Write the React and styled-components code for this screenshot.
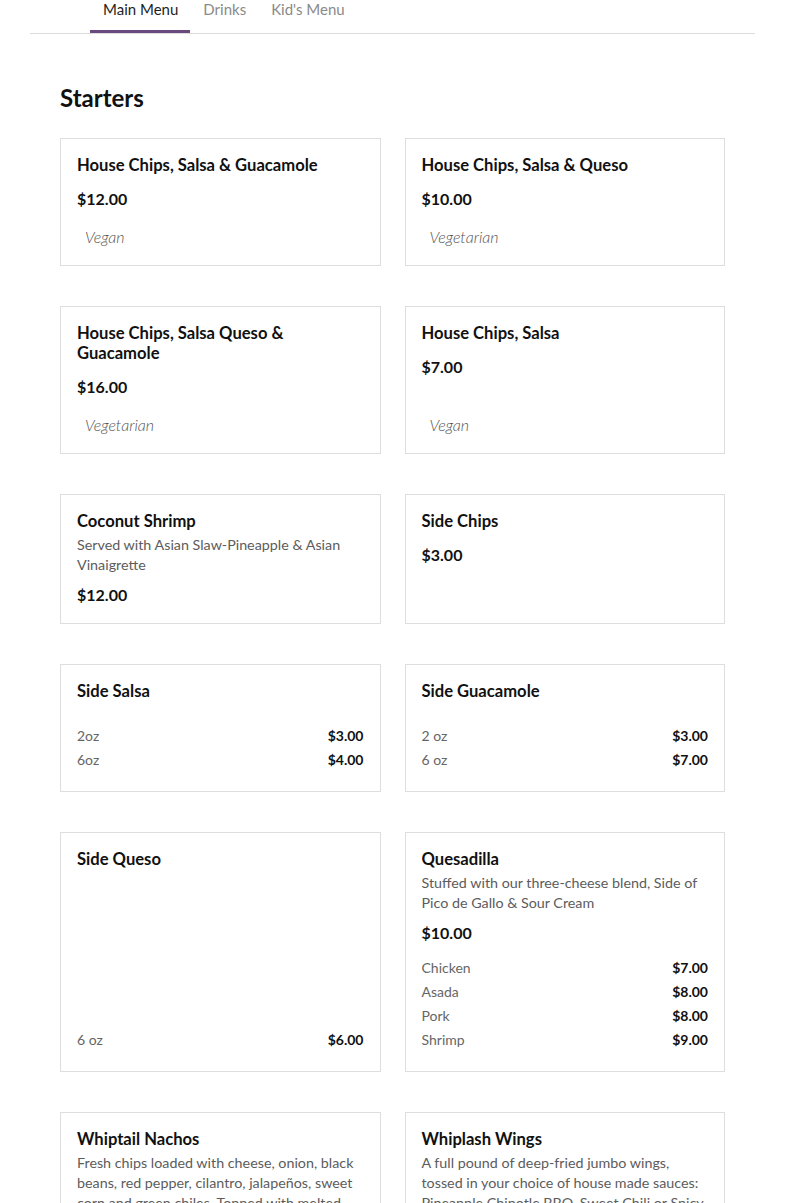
import React from "react";
import styled, { createGlobalStyle } from "styled-components";

const GlobalStyle = createGlobalStyle`
  * { box-sizing: border-box; }
  body {
    margin: 0;
    background: #fff;
    font-family: Lato, "Noto Sans", "Liberation Sans", sans-serif;
    color: #111;
  }
`;

const Page = styled.div`
  margin: 0 30px;
`;

const TabList = styled.nav`
  display: flex;
  padding-left: 60px;
  border-bottom: 1px solid #dcdcdc;
`;

const Tab = styled.a`
  display: block;
  padding: 0 12px 12px 13px;
  font-size: 15px;
  line-height: 18px;
  color: ${(p) => (p.$active ? "#1e1e1e" : "#8a8a8a")};
  border-bottom: 3px solid ${(p) => (p.$active ? "#6a4a7e" : "transparent")};
  cursor: pointer;
`;

const Content = styled.main`
  padding: 48px 30px 40px;
`;

const SectionTitle = styled.h2`
  margin: 0 0 24px;
  font-size: 24px;
  line-height: 32px;
  font-weight: 700;
  color: #111;
`;

const Grid = styled.div`
  display: grid;
  grid-template-columns: 1fr 1fr;
  column-gap: 24px;
  row-gap: 40px;
`;

const Card = styled.div`
  display: flex;
  flex-direction: column;
  border: 1px solid #dedede;
  padding: 16px;
`;

const ItemName = styled.h3`
  margin: 0 0 4px;
  font-size: 16.6px;
  line-height: 20px;
  font-weight: 700;
  color: #111;
`;

const Desc = styled.p`
  margin: 0;
  font-size: 14.3px;
  line-height: 20px;
  color: #5c5c5c;
`;

const Price = styled.div`
  margin-top: 8px;
  font-size: 16px;
  line-height: 24px;
  font-weight: 700;
  color: #111;
  min-height: ${(p) => (p.$empty ? "0" : "24px")};
`;

const Tag = styled.div`
  margin-top: auto;
  padding: 14px 8px 0;
  font-size: 16px;
  line-height: 24px;
  font-style: italic;
  font-weight: 300;
  color: #555;
`;

const Options = styled.div`
  margin-top: auto;
  padding-top: 11px;
  padding-bottom: 3px;
`;

const OptionRow = styled.div`
  display: flex;
  justify-content: space-between;
  font-size: 14px;
  line-height: 24px;
`;

const OptionLabel = styled.span`
  color: #666;
`;

const OptionPrice = styled.span`
  font-weight: 700;
  color: #111;
`;

const items = [
  { name: "House Chips, Salsa & Guacamole", price: "$12.00", tag: "Vegan" },
  { name: "House Chips, Salsa & Queso", price: "$10.00", tag: "Vegetarian" },
  { name: "House Chips, Salsa Queso & Guacamole", price: "$16.00", tag: "Vegetarian" },
  { name: "House Chips, Salsa", price: "$7.00", tag: "Vegan" },
  {
    name: "Coconut Shrimp",
    desc: "Served with Asian Slaw-Pineapple & Asian Vinaigrette",
    price: "$12.00",
  },
  { name: "Side Chips", price: "$3.00" },
  {
    name: "Side Salsa",
    options: [
      ["2oz", "$3.00"],
      ["6oz", "$4.00"],
    ],
  },
  {
    name: "Side Guacamole",
    options: [
      ["2 oz", "$3.00"],
      ["6 oz", "$7.00"],
    ],
  },
  { name: "Side Queso", options: [["6 oz", "$6.00"]] },
  {
    name: "Quesadilla",
    desc: "Stuffed with our three-cheese blend, Side of Pico de Gallo & Sour Cream",
    price: "$10.00",
    options: [
      ["Chicken", "$7.00"],
      ["Asada", "$8.00"],
      ["Pork", "$8.00"],
      ["Shrimp", "$9.00"],
    ],
  },
  {
    name: "Whiptail Nachos",
    desc: "Fresh chips loaded with cheese, onion, black beans, red pepper, cilantro, jalapeños, sweet corn and green chiles. Topped with melted cheese, pico de gallo, sour cream and guacamole.",
    price: "$14.00",
  },
  {
    name: "Whiplash Wings",
    desc: "A full pound of deep-fried jumbo wings, tossed in your choice of house made sauces: Pineapple Chipotle BBQ, Sweet Chili or Spicy Buffalo.",
    price: "$15.00",
  },
];

function MenuCard({ item }) {
  return (
    <Card>
      <ItemName>{item.name}</ItemName>
      {item.desc && <Desc>{item.desc}</Desc>}
      <Price $empty={!item.price}>{item.price}</Price>
      {item.tag && <Tag>{item.tag}</Tag>}
      {item.options && (
        <Options>
          {item.options.map(([label, price]) => (
            <OptionRow key={label}>
              <OptionLabel>{label}</OptionLabel>
              <OptionPrice>{price}</OptionPrice>
            </OptionRow>
          ))}
        </Options>
      )}
    </Card>
  );
}

export default function App() {
  return (
    <>
      <GlobalStyle />
      <Page>
        <TabList>
          <Tab $active>Main Menu</Tab>
          <Tab>Drinks</Tab>
          <Tab>Kid's Menu</Tab>
        </TabList>
        <Content>
          <SectionTitle>Starters</SectionTitle>
          <Grid>
            {items.map((item) => (
              <MenuCard key={item.name} item={item} />
            ))}
          </Grid>
        </Content>
      </Page>
    </>
  );
}
